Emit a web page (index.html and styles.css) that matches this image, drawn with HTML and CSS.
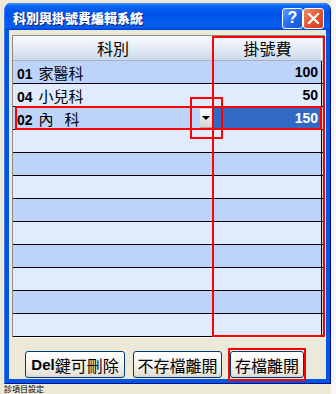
FILE: index.html
```html
<!DOCTYPE html>
<html>
<head>
<meta charset="utf-8">
<link rel="stylesheet" href="styles.css">
</head>
<body>
<div class="screen">
  <div class="window">
    <div class="titlebar">
      <span class="title">科別與掛號費編輯系統</span>
      <div class="tbtns">
        <span class="tbtn help">?</span>
        <span class="tbtn close"><svg width="13" height="13" viewBox="0 0 13 13"><path d="M2 2 L11 11 M11 2 L2 11" stroke="#fff" stroke-width="2.2" stroke-linecap="square"/></svg></span>
      </div>
    </div>
    <div class="client">
      <div class="grid">
        <div class="hrow"><div class="c1 hc">科別</div><div class="c2 hc">掛號費</div></div>
        <div class="row dark"><div class="c1"><span><b>01</b>家醫科</span></div><div class="c2"><b>100</b></div></div>
        <div class="row light"><div class="c1"><span><b>04</b>小兒科</span></div><div class="c2"><b>50</b></div></div>
        <div class="row dark"><div class="c1"><span><b>02</b>內<span class="sp"></span>科</span><span class="drop"><svg width="8" height="4" viewBox="0 0 8 4"><path d="M0 0 H8 L4 4 Z" fill="#000"/></svg></span></div><div class="c2 sel"><b>150</b></div></div>
        <div class="row light"><div class="c1"></div><div class="c2"></div></div>
        <div class="row dark"><div class="c1"></div><div class="c2"></div></div>
        <div class="row light"><div class="c1"></div><div class="c2"></div></div>
        <div class="row dark"><div class="c1"></div><div class="c2"></div></div>
        <div class="row light"><div class="c1"></div><div class="c2"></div></div>
        <div class="row dark"><div class="c1"></div><div class="c2"></div></div>
        <div class="row light"><div class="c1"></div><div class="c2"></div></div>
        <div class="row dark"><div class="c1"></div><div class="c2"></div></div>
        <div class="row light last"><div class="c1"></div><div class="c2"></div></div>
        <div class="mark mark-col"></div>
        <div class="mark mark-row"></div>
        <div class="mark mark-drop"></div>
      </div>
      <div class="buttons">
        <span class="btn b1"><b class="del">Del</b>鍵可刪除</span>
        <span class="btn b2">不存檔離開</span>
        <span class="btn b3">存檔離開</span>
      </div>
    </div>
  </div>
  <div class="under">診項目設定</div>
</div>
</body>
</html>
```
FILE: styles.css
```css
html, body {
  margin: 0;
  padding: 0;
}
body {
  background: #ECE9D8;
  font-family: "Noto Sans CJK TC", "Liberation Sans", sans-serif;
}
.screen {
  width: 336px;
  height: 394px;
  overflow: hidden;
  padding: 3px 0 0 4px;
  box-sizing: border-box;
  background: linear-gradient(to right, #ECE9D8 0, #ECE9D8 331px, #F4F6FA 331px);
}
.window {
  width: 327px;
  height: 381px;
  box-sizing: border-box;
  background: #0055E5;
  border-radius: 7px 7px 0 0;
  border-left: 1px solid #3C7FF0;
  border-right: 1px solid #00138C;
  border-bottom: 1px solid #00138C;
  display: flex;
  flex-direction: column;
}
.titlebar {
  height: 27px;
  flex: none;
  border-radius: 7px 7px 0 0;
  background: linear-gradient(#3D95FF 0, #0A66F0 3px, #0058EE 8px, #0054E8 50%, #0A5FF2 85%, #0058E8 92%, #0040D0 100%);
  display: flex;
  align-items: center;
  padding: 0 6px 0 8px;
}
.title {
  flex: 1;
  color: #fff;
  font-size: 13px;
  font-weight: 900;
  text-shadow: 1px 1px 0 #0A1E80;
  margin-top: 1px;
}
.tbtns {
  display: flex;
  margin-top: 3px;
}
.tbtn {
  width: 21px;
  height: 21px;
  box-sizing: border-box;
  border: 1px solid #fff;
  border-radius: 3px;
  display: flex;
  align-items: center;
  justify-content: center;
}
.help {
  background: linear-gradient(135deg, #5B9BFF, #1E64E8 60%, #1A55D0);
  color: #fff;
  font-family: "Liberation Sans", sans-serif;
  font-weight: bold;
  font-size: 16px;
}
.close {
  background: linear-gradient(135deg, #F0916A, #E0532E 55%, #C8401E);
}
.client {
  margin: 0 4px 4px 4px;
  height: 349px;
  background: #ECE9D8;
  padding: 5px 0 0 3px;
  box-sizing: border-box;
}
.grid {
  position: relative;
  width: 314px;
  box-sizing: border-box;
  border-top: 1px solid #8E8C80;
  border-left: 1px solid #8E8C80;
  border-right: 2px solid #FFFFFF;
  border-bottom: 1px solid #FFFFFF;
  background: #D4D0C8;
}
.hrow, .row {
  display: flex;
}
.hrow {
  height: 24px;
  border-bottom: 1px solid #A8B4C4;
}
.row {
  height: 22px;
  border-bottom: 1px solid #000;
}
.c1 {
  width: 201px;
  border-right: 1px solid #000;
  display: flex;
  align-items: center;
  justify-content: space-between;
  padding-left: 4px;
  box-sizing: border-box;
  font-size: 15px;
  color: #000;
}
.c2 {
  width: 108px;
  border-right: 1px solid #000;
  box-sizing: border-box;
  display: flex;
  align-items: center;
  justify-content: flex-end;
  padding-right: 3px;
}
.c1 b, .c2 b {
  font-family: "Liberation Sans", sans-serif;
  font-size: 14px;
  font-weight: bold;
}
.c1 b { margin-right: 6px; }
.hc {
  justify-content: center;
  padding: 0;
  font-size: 16px;
  background: linear-gradient(#F8FAFD, #E6EDF6 45%, #CCD9EA);
  border-right: 1px solid #FFFFFF;
}
.hrow .c1 { border-right: 1px solid #B8C4D4; }
.dark .c1, .dark .c2 { background: #BDD3FA; }
.light .c1, .light .c2 { background: #E0EBFD; }
.dark .c2.sel { background: #316AC5; color: #fff; }
.sp { display: inline-block; width: 11px; }
.drop {
  width: 13px;
  height: 19px;
  background: linear-gradient(#FDFDFD, #E6E6E6 60%, #D6D3CE);
  border-right: 1px solid #C8C4BC;
  border-bottom: 1px solid #B0A898;
  box-sizing: border-box;
  display: flex;
  align-items: center;
  justify-content: center;
}
.mark {
  position: absolute;
  border: 2px solid #FF0000;
  box-sizing: border-box;
}
.mark-col { left: 199px; top: 0; width: 113px; height: 301px; }
.mark-row { left: 2px; top: 70px; width: 307px; height: 24px; }
.mark-drop { left: 177px; top: 61px; width: 33px; height: 42px; }
.buttons {
  display: flex;
  gap: 8px;
  padding-left: 13px;
  margin-top: 13px;
}
.btn {
  position: relative;
  height: 27px;
  box-sizing: border-box;
  border: 1px solid #003C74;
  border-radius: 3px;
  background: linear-gradient(#FFFFFF, #F4F3EE 50%, #E6E3DA 90%, #D6D0C5);
  display: flex;
  align-items: center;
  justify-content: center;
  font-size: 16px;
  color: #000;
}
.b1 { width: 100px; }
.b2 { width: 89px; }
.b3 { width: 74px; }
.del {
  font-family: "Liberation Sans", sans-serif;
  font-weight: bold;
  font-size: 15px;
}
.b3::after {
  content: "";
  position: absolute;
  left: -3px;
  right: -3px;
  top: -4px;
  bottom: -4px;
  border: 2px solid #FF0000;
}
.under {
  font-size: 8px;
  line-height: 9px;
  margin-left: 0;
  color: #000;
}
```
